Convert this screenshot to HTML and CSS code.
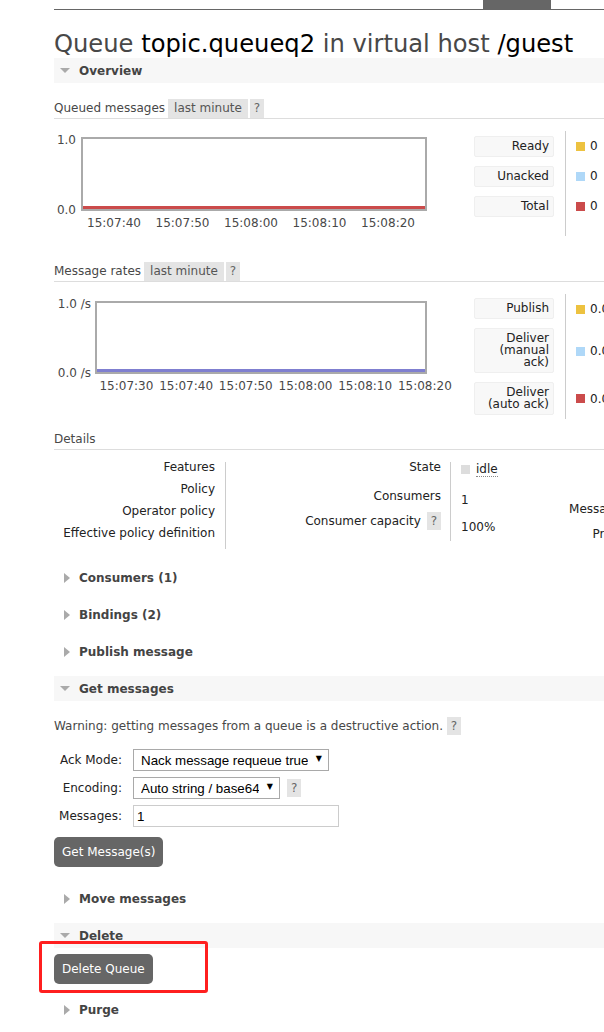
FILE: index.html
```html
<!DOCTYPE html>
<html>
<head>
<meta charset="utf-8">
<title>Queue topic.queueq2</title>
<link rel="stylesheet" href="styles.css">
</head>
<body>
<div class="page">
  <div class="topbar"><div class="tab"></div></div>
  <h1>Queue <b>topic.queueq2</b> in virtual host <b>/guest</b></h1>

  <div class="sh open"><span class="tri-down"></span>Overview</div>

  <div class="h3 first"><span>Queued messages</span><span class="badge">last minute</span><span class="badge qm">?</span></div>
  <div class="chartrow">
    <div class="chart">
      <div class="plotrow">
        <div class="yaxis y1"><span>1.0</span><span>0.0</span></div>
        <div class="plot p1"><div class="line red"></div></div>
      </div>
      <div class="xaxis x1"><span>15:07:40</span><span>15:07:50</span><span>15:08:00</span><span>15:08:10</span><span>15:08:20</span></div>
    </div>
    <div class="legend lq">
      <div class="lg-label"><span>Ready</span></div>
      <div class="lg-val"><i class="sw yellow"></i>0</div>
      <div class="lg-label"><span>Unacked</span></div>
      <div class="lg-val"><i class="sw blue"></i>0</div>
      <div class="lg-label last"><span>Total</span></div>
      <div class="lg-val last"><i class="sw red"></i>0</div>
    </div>
  </div>

  <div class="h3 second"><span>Message rates</span><span class="badge">last minute</span><span class="badge qm">?</span></div>
  <div class="chartrow">
    <div class="chart c2">
      <div class="plotrow">
        <div class="yaxis y2"><span>1.0 /s</span><span>0.0 /s</span></div>
        <div class="plot p2"><div class="line purple"></div></div>
      </div>
      <div class="xaxis x2"><span>15:07:30</span><span>15:07:40</span><span>15:07:50</span><span>15:08:00</span><span>15:08:10</span><span>15:08:20</span></div>
    </div>
    <div class="legend lr">
      <div class="lg-label"><span>Publish</span></div>
      <div class="lg-val"><i class="sw yellow"></i>0.00/s</div>
      <div class="lg-label"><span>Deliver (manual ack)</span></div>
      <div class="lg-val"><i class="sw blue"></i>0.00/s</div>
      <div class="lg-label last"><span>Deliver (auto ack)</span></div>
      <div class="lg-val last"><i class="sw red"></i>0.00/s</div>
    </div>
  </div>

  <div class="h3 third"><span>Details</span></div>
  <div class="details">
    <div class="dt-labels">
      <div>Features</div>
      <div>Policy</div>
      <div>Operator policy</div>
      <div>Effective policy definition</div>
    </div>
    <div class="vsep s1"></div>
    <div class="dt-mid">
      <div class="r1">State</div>
      <div class="r2">Consumers</div>
      <div class="r3">Consumer capacity <span class="badge qm">?</span></div>
    </div>
    <div class="vsep s2"></div>
    <div class="dt-vals">
      <div class="r1"><i class="idle-sq"></i><abbr class="idle">idle</abbr></div>
      <div class="r2">1</div>
      <div class="r3">100%</div>
    </div>
    <div class="dt-right">
      <div>Messages</div>
      <div>Message body bytes</div>
      <div>Process memory</div>
    </div>
  </div>

  <div class="sh closed c1"><span class="tri-right"></span>Consumers (1)</div>
  <div class="sh closed"><span class="tri-right"></span>Bindings (2)</div>
  <div class="sh closed"><span class="tri-right"></span>Publish message</div>
  <div class="sh open"><span class="tri-down"></span>Get messages</div>

  <p class="warn">Warning: getting messages from a queue is a destructive action. <span class="badge qm">?</span></p>
  <div class="form">
    <label>Ack Mode:</label>
    <div class="ctl"><span class="sel s-ack"><select><option>Nack message requeue true</option></select></span></div>
    <label>Encoding:</label>
    <div class="ctl"><span class="sel s-enc"><select><option>Auto string / base64</option></select></span><span class="badge qm">?</span></div>
    <label>Messages:</label>
    <div class="ctl"><input class="txt" type="text" value="1"></div>
  </div>
  <button class="btn get">Get Message(s)</button>

  <div class="sh closed move"><span class="tri-right"></span>Move messages</div>
  <div class="sh open"><span class="tri-down"></span>Delete</div>
  <div class="delwrap">
    <button class="btn del">Delete Queue</button>
    <div class="annot"></div>
  </div>
  <div class="sh closed purge"><span class="tri-right"></span>Purge</div>
</div>
</body>
</html>
```

FILE: styles.css
```css
html, body {
  margin: 0;
  padding: 0;
  overflow: hidden;
  background: #fff;
}
body {
  font-family: "DejaVu Sans", Verdana, sans-serif;
  font-size: 12px;
  color: #484848;
}
.page {
  margin-left: 54px;
  width: 720px;
}
.topbar {
  height: 9px;
  border-bottom: 1px solid #666;
  display: flex;
}
.tab {
  margin-left: 429px;
  width: 68px;
  height: 9px;
  background: #666;
}
h1 {
  font-size: 24.2px;
  font-weight: normal;
  line-height: 28px;
  margin: 20px 0 0 0;
  color: #484848;
  white-space: nowrap;
}
h1 b {
  font-weight: normal;
  color: #000;
}

/* section headers */
.sh {
  height: 25px;
  display: flex;
  align-items: center;
  font-weight: bold;
  font-size: 12px;
  color: #444;
  padding-left: 6px;
  margin-top: 12px;
  white-space: nowrap;
}
.sh.open { background: #f7f7f7; }
h1 + .sh { margin-top: 0; }
.sh.c1 { margin-top: 16px; }
.sh.move { margin-top: 19px; }
.sh.purge { margin-top: 13px; }
.tri-down {
  width: 0; height: 0;
  border-left: 5px solid transparent;
  border-right: 5px solid transparent;
  border-top: 5px solid #aaa;
  margin-right: 9px;
}
.tri-right {
  width: 0; height: 0;
  border-top: 5px solid transparent;
  border-bottom: 5px solid transparent;
  border-left: 6px solid #aaa;
  margin-left: 4px;
  margin-right: 9px;
}

/* chart headings */
.h3 {
  display: flex;
  align-items: center;
  height: 19px;
  line-height: 19px;
  border-bottom: 1px solid #ddd;
  color: #484848;
  white-space: nowrap;
}
.h3.first { margin-top: 16px; }
.h3.second { margin-top: 26px; }
.h3.third { margin-top: 11px; }
.badge {
  display: inline-block;
  background: #e4e4e4;
  color: #555;
  padding: 0 6px;
  line-height: 19px;
  margin-left: 3px;
}
.badge.qm {
  padding: 0 4px;
  margin-left: 2px;
  color: #666;
}

/* charts */
.chartrow {
  display: flex;
  align-items: flex-start;
  margin-top: 12px;
}
.chart {
  width: 420px;
  padding-top: 6px;
}
.chart.c2 { padding-top: 7px; }
.plotrow {
  display: flex;
  align-items: flex-start;
}
.yaxis {
  display: flex;
  flex-direction: column;
  justify-content: space-between;
  text-align: right;
  line-height: 14px;
  margin-top: -4px;
  color: #484848;
  white-space: nowrap;
}
.y1 { width: 22px; padding-right: 5px; height: 84px; }
.y2 { width: 37px; padding-right: 4px; height: 83px; }
.plot {
  box-sizing: border-box;
  border: 2px solid #aaa;
  display: flex;
  flex-direction: column;
  justify-content: flex-end;
}
.p1 { width: 346px; height: 74px; }
.p2 { width: 332px; height: 73px; }
.line { height: 3px; }
.line.red { background: #cb4b4b; }
.line.purple { background: #7f7fd0; }
.xaxis {
  display: flex;
  margin-top: -1px;
  line-height: 14px;
  color: #484848;
  white-space: nowrap;
}
.xaxis span { flex: none; display: flex; justify-content: center; }
.x1 { padding-left: 25.75px; }
.x1 span { width: 68.5px; }
.x2 { padding-left: 42.6px; }
.x2 span { width: 59.7px; }

/* legend */
.legend {
  display: grid;
  grid-template-columns: 80px auto;
  align-items: stretch;
}
.lg-label {
  padding: 5px 0 4px 0;
}
.lg-label span {
  display: block;
  box-sizing: border-box;
  background: #f8f8f8;
  border: 1px solid #efefef;
  border-radius: 2px;
  text-align: right;
  line-height: 12px;
  padding: 3px 4px 4px 4px;
  color: #222;
}
.lg-val {
  margin-left: 11px;
  border-left: 1px solid #ccc;
  padding-left: 10px;
  display: flex;
  align-items: center;
  color: #222;
  white-space: nowrap;
}
.lq .lg-label.last { padding-bottom: 19px; }
.lq .lg-val.last { padding-bottom: 15px; }
.lr .lg-label { padding: 4px 0 5px 0; }
.lr .lg-label.last { padding-bottom: 4px; }
.sw {
  display: inline-block;
  width: 9px;
  height: 9px;
  margin-right: 5px;
}
.sw.yellow { background: #edc240; }
.sw.blue { background: #afd8f8; }
.sw.red { background: #cb4b4b; }

/* details */
.details {
  display: flex;
  align-items: flex-start;
  margin-top: 6px;
  color: #222;
  white-space: nowrap;
}
.dt-labels {
  width: 171px;
  padding-right: 10px;
  box-sizing: border-box;
  text-align: right;
  line-height: 22px;
}
.vsep {
  width: 1px;
  background: #ccc;
  margin-top: 6px;
  flex: none;
}
.vsep.s1 { height: 87px; }
.vsep.s2 { height: 79px; }
.dt-mid {
  width: 224px;
  box-sizing: border-box;
  padding-right: 9px;
  text-align: right;
}
.dt-mid div, .dt-vals div { height: 22px; line-height: 22px; }
.dt-mid .r2, .dt-vals .r2 { margin-top: 7px; }
.dt-mid .r3, .dt-vals .r3 { margin-top: 3px; }
.dt-mid .badge.qm { line-height: 18px; }
.dt-vals {
  width: 90px;
  padding-left: 10px;
  flex: none;
}
.dt-vals .r1 { display: flex; align-items: center; padding-top: 2px; }
.dt-vals .r2, .dt-vals .r3 { padding-top: 2px; }
.idle-sq {
  display: inline-block;
  width: 9px;
  height: 9px;
  background: #ddd;
  margin-right: 6px;
}
.idle {
  text-decoration: none;
  border-bottom: 1px dotted #888;
  line-height: 14px;
}
.dt-right {
  width: 141px;
  flex: none;
  text-align: right;
  padding-top: 16px;
  line-height: 25px;
}

/* get messages */
.warn {
  margin: 16px 0 0 0;
  line-height: 18px;
  color: #484848;
  white-space: nowrap;
}
.warn .badge.qm { line-height: 18px; margin-left: 0; }
.form {
  display: grid;
  grid-template-columns: 68px auto;
  column-gap: 11px;
  row-gap: 6px;
  align-items: center;
  margin-top: 14px;
}
.form label {
  text-align: right;
  color: #222;
  white-space: nowrap;
}
.ctl { display: flex; align-items: center; }
.sel {
  position: relative;
  display: inline-block;
}
.sel select {
  -webkit-appearance: none;
  appearance: none;
  font-family: "Liberation Sans", Arial, sans-serif;
  font-size: 13.33px;
  height: 22px;
  border: 1px solid #a9a9a9;
  border-radius: 0;
  background: #fff;
  color: #000;
  padding: 0 20px 0 7px;
  margin: 0;
  box-sizing: border-box;
}
.sel::after {
  content: "\25BC";
  position: absolute;
  right: 7px;
  top: 6px;
  font-size: 8px;
  line-height: 8px;
  color: #000;
  pointer-events: none;
}
.s-ack select { width: 196px; }
.s-enc select { width: 147px; }
.ctl .badge.qm { margin-left: 7px; line-height: 18px; }
.txt {
  width: 206px;
  height: 22px;
  box-sizing: border-box;
  border: 1px solid #ccc;
  padding: 0 3px;
  font-family: "Liberation Sans", Arial, sans-serif;
  font-size: 13.33px;
  color: #000;
  margin: 0;
}
.btn {
  display: block;
  background: #666;
  color: #fff;
  border: none;
  border-radius: 5px;
  font-family: "DejaVu Sans", Verdana, sans-serif;
  font-size: 12px;
  height: 30px;
  padding: 0 8px;
  margin: 0;
  white-space: nowrap;
}
.btn.get { margin-top: 10px; }
.delwrap {
  position: relative;
  margin-top: 6px;
}
.annot {
  position: absolute;
  left: -15px;
  top: -13px;
  width: 169px;
  height: 52px;
  box-sizing: border-box;
  border: 3px solid #ff1f1f;
  border-radius: 3px;
}
```
